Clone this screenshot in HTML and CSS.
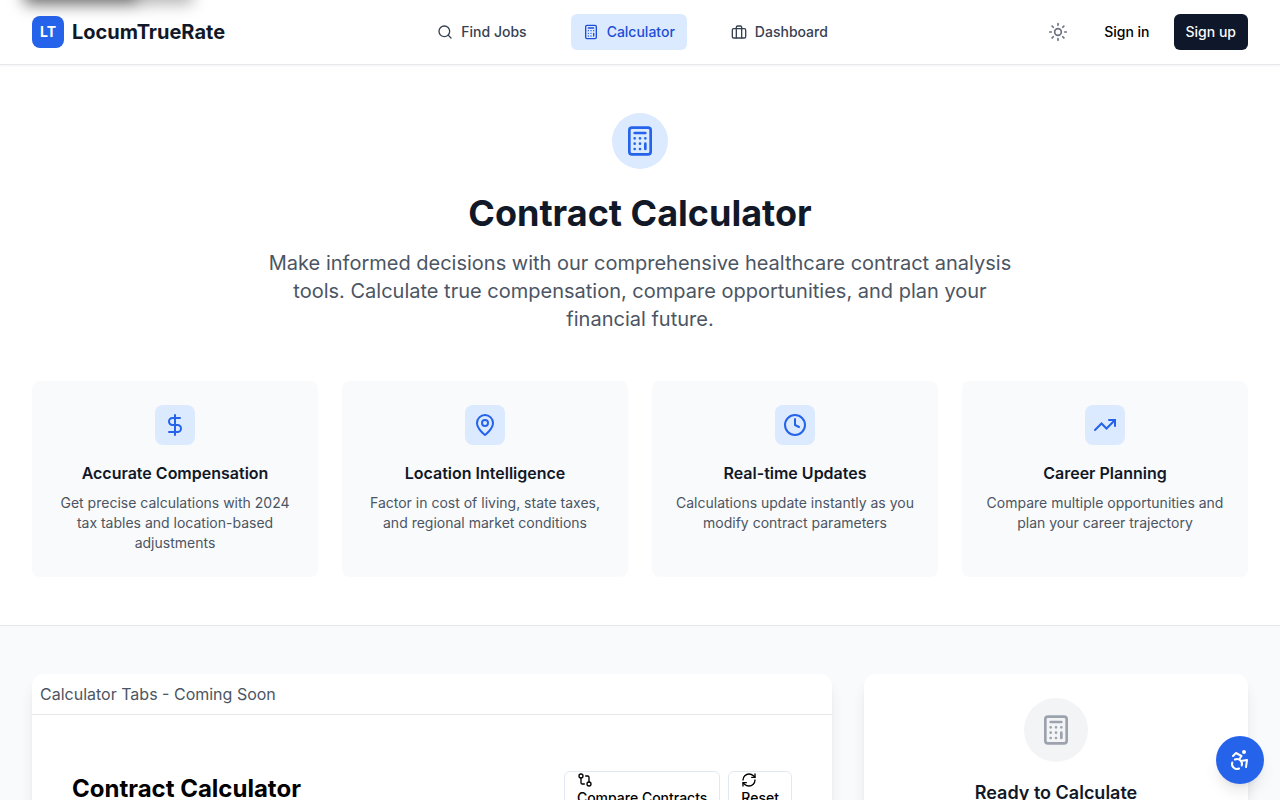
FILE: index.html
```html
<!DOCTYPE html>
<html lang="en">
<head>
<meta charset="utf-8">
<meta name="viewport" content="width=device-width, initial-scale=1">
<title>Contract Calculator | LocumTrueRate</title>
<link rel="stylesheet" href="styles.css">
</head>
<body>
<svg class="sprite" aria-hidden="true">
  <symbol id="calculator" viewBox="0 0 24 24"><rect x="4" y="2" width="16" height="20" rx="2"/><path d="M8 6h8M16 14v4M16 10h.01M12 10h.01M8 10h.01M12 14h.01M8 14h.01M12 18h.01M8 18h.01"/></symbol>
  <symbol id="search" viewBox="0 0 24 24"><circle cx="11" cy="11" r="8"/><path d="m21 21-4.300-4.300"/></symbol>
  <symbol id="briefcase" viewBox="0 0 24 24"><rect x="2" y="7" width="20" height="14" rx="2"/><path d="M16 21V5a2 2 0 0 0-2-2h-4a2 2 0 0 0-2 2v16"/></symbol>
  <symbol id="sun" viewBox="0 0 24 24"><circle cx="12" cy="12" r="4"/><path d="M12 2v2M12 20v2m-7.070-17.070 1.410 1.410m11.320 11.320 1.410 1.410M2 12h2m16 0h2M6.340 17.660l-1.410 1.410M19.070 4.930l-1.410 1.410"/></symbol>
  <symbol id="dollar" viewBox="0 0 24 24"><path d="M12 2v20M17 5H9.500a3.500 3.500 0 0 0 0 7h5a3.500 3.500 0 0 1 0 7H6"/></symbol>
  <symbol id="pin" viewBox="0 0 24 24"><path d="M20 10c0 6-8 12-8 12s-8-6-8-12a8 8 0 0 1 16 0Z"/><circle cx="12" cy="10" r="3"/></symbol>
  <symbol id="clock" viewBox="0 0 24 24"><circle cx="12" cy="12" r="10"/><path d="M12 6v6l4 2"/></symbol>
  <symbol id="trend" viewBox="0 0 24 24"><path d="m22 7-8.500 8.500-5-5L2 17"/><path d="M16 7h6v6"/></symbol>
  <symbol id="compare" viewBox="0 0 24 24"><circle cx="18" cy="18" r="3"/><circle cx="6" cy="6" r="3"/><path d="M13 6h3a2 2 0 0 1 2 2v7M11 18H8a2 2 0 0 1-2-2V9"/></symbol>
  <symbol id="refresh" viewBox="0 0 24 24"><path d="M3 12a9 9 0 0 1 9-9 9.750 9.750 0 0 1 6.740 2.740L21 8"/><path d="M21 3v5h-5M21 12a9 9 0 0 1-9 9 9.750 9.750 0 0 1-6.740-2.740L3 16"/><path d="M8 16H3v5"/></symbol>
  <symbol id="accessibility" viewBox="0 0 24 24"><circle cx="16" cy="4" r="1"/><path d="m18 19 1-7-6 1M5 8l3-3 5.500 3-2.360 3.500M4.240 14.500a5 5 0 0 0 6.880 6M13.760 17.500a5 5 0 0 0-6.880-6"/></symbol>
</svg>

<div class="skip-links">
  <a class="skip-link skip-content" href="#main">Skip to content</a>
  <a class="skip-link skip-nav" href="#nav">Menu</a>
</div>

<header class="site-header">
  <div class="container header-row">
    <a class="brand" href="#"><span class="brand-mark">LT</span><span class="brand-name">LocumTrueRate</span></a>
    <nav class="nav" id="nav" aria-label="Main">
      <a class="nav-link" href="#"><svg class="icon icon-sm"><use href="#search"/></svg>Find Jobs</a>
      <a class="nav-link nav-link-active" href="#" aria-current="page"><svg class="icon icon-sm"><use href="#calculator"/></svg>Calculator</a>
      <a class="nav-link" href="#"><svg class="icon icon-sm"><use href="#briefcase"/></svg>Dashboard</a>
    </nav>
    <div class="actions">
      <button class="theme-toggle" type="button" aria-label="Toggle theme"><svg class="icon icon-md"><use href="#sun"/></svg></button>
      <div class="auth">
        <button class="btn btn-ghost" type="button">Sign in</button>
        <button class="btn btn-dark" type="button">Sign up</button>
      </div>
    </div>
  </div>
</header>

<main id="main">
  <section class="hero">
    <div class="container">
      <div class="intro">
        <div class="hero-icon"><svg class="icon icon-xl"><use href="#calculator"/></svg></div>
        <h1 class="hero-title">Contract Calculator</h1>
        <p class="hero-text">Make informed decisions with our comprehensive healthcare contract analysis tools. Calculate true compensation, compare opportunities, and plan your financial future.</p>
      </div>
      <div class="features">
        <article class="feature">
          <div class="feature-icon"><svg class="icon icon-lg"><use href="#dollar"/></svg></div>
          <h3 class="feature-title">Accurate Compensation</h3>
          <p class="feature-text">Get precise calculations with 2024 tax tables and location-based adjustments</p>
        </article>
        <article class="feature">
          <div class="feature-icon"><svg class="icon icon-lg"><use href="#pin"/></svg></div>
          <h3 class="feature-title">Location Intelligence</h3>
          <p class="feature-text">Factor in cost of living, state taxes, and regional market conditions</p>
        </article>
        <article class="feature">
          <div class="feature-icon"><svg class="icon icon-lg"><use href="#clock"/></svg></div>
          <h3 class="feature-title">Real-time Updates</h3>
          <p class="feature-text">Calculations update instantly as you modify contract parameters</p>
        </article>
        <article class="feature">
          <div class="feature-icon"><svg class="icon icon-lg icon-sharp"><use href="#trend"/></svg></div>
          <h3 class="feature-title">Career Planning</h3>
          <p class="feature-text">Compare multiple opportunities and plan your career trajectory</p>
        </article>
      </div>
    </div>
  </section>

  <div class="container workspace">
    <section class="panel">
      <div class="tabs">Calculator Tabs - Coming Soon</div>
      <div class="panel-body">
        <h2 class="panel-title">Contract Calculator</h2>
        <div class="tools">
          <button class="btn btn-outline" type="button"><svg class="icon icon-sm"><use href="#compare"/></svg>Compare Contracts</button>
          <button class="btn btn-outline" type="button"><svg class="icon icon-sm"><use href="#refresh"/></svg>Reset</button>
        </div>
      </div>
    </section>
    <aside class="panel ready">
      <div class="ready-icon"><svg class="icon icon-xl"><use href="#calculator"/></svg></div>
      <h3 class="ready-title">Ready to Calculate</h3>
    </aside>
  </div>
</main>

<button class="fab" type="button" aria-label="Accessibility options"><svg class="icon icon-lg"><use href="#accessibility"/></svg></button>
</body>
</html>
```
FILE: styles.css
```css
*, *::before, *::after { box-sizing: border-box; }
body {
  margin: 0;
  background: #f9fafb;
  color: #000;
  font-family: Inter, "Liberation Sans", sans-serif;
  font-size: 16px;
  line-height: 24px;
  -webkit-font-smoothing: antialiased;
}
h1, h2, h3, p { margin: 0; }
a { color: inherit; text-decoration: none; }
button { font: inherit; color: inherit; border: 0; background: none; cursor: pointer; }

.sprite { position: absolute; width: 0; height: 0; }
.icon { display: block; flex: none; fill: none; stroke: currentColor; stroke-width: 2; stroke-linecap: round; stroke-linejoin: round; }
.icon-sm { width: 16px; height: 16px; }
.icon-md { width: 20px; height: 20px; }
.icon-lg { width: 24px; height: 24px; }
.icon-xl { width: 32px; height: 32px; }
.icon-sharp { stroke-linejoin: miter; }

.container { max-width: 1280px; margin: 0 auto; padding: 0 32px; }

/* Parked just above the window until focused; their shadows reach below the edge. */
.skip-links { position: absolute; top: -48px; left: 24px; z-index: 20; display: flex; }
.skip-links:focus-within { top: 8px; }
.skip-link {
  padding: 8px 8px 16px;
  border-radius: 4px;
  background: #000;
  color: #fff;
  font-size: 14px;
  white-space: nowrap;
}
.skip-content { box-shadow: 0 4px 16px rgba(0, 0, 0, .6); }
.skip-nav { box-shadow: 0 4px 16px rgba(0, 0, 0, .3); }

.site-header {
  position: sticky;
  top: 0;
  z-index: 10;
  background: #fff;
  border-bottom: 1px solid #e5e7eb;
  box-shadow: 0 1px 2px rgba(0, 0, 0, .05);
}
.header-row { display: flex; align-items: center; justify-content: space-between; min-height: 64px; }
.brand { display: flex; align-items: center; gap: 8px; }
.brand-mark {
  display: grid;
  place-items: center;
  width: 32px;
  height: 32px;
  border-radius: 8px;
  background: #2563eb;
  color: #fff;
  font-size: 14px;
  font-weight: 700;
}
.brand-name { color: #111827; font-size: 20px; font-weight: 700; line-height: 28px; }
.nav { display: flex; gap: 32px; }
.nav-link {
  display: flex;
  align-items: center;
  gap: 8px;
  padding: 8px 12px;
  border-radius: 6px;
  color: #374151;
  font-size: 14px;
  font-weight: 500;
  line-height: 20px;
}
.nav-link-active { background: #dbeafe; color: #1d4ed8; }
.actions { display: flex; align-items: center; gap: 16px; }
.auth { display: flex; gap: 12px; }
.theme-toggle { padding: 8px; color: #6b7280; }
.btn { height: 36px; padding: 0 12px; border-radius: 6px; font-size: 14px; font-weight: 500; line-height: 20px; white-space: nowrap; }
.btn-dark { background: #0f172a; color: #f8fafc; }
.btn-outline { padding-bottom: 2px; border: 1px solid #e2e8f0; background: #fff; text-align: left; }

.hero { padding: 48px 0; background: #fff; border-bottom: 1px solid #e5e7eb; }
.intro { display: flex; flex-direction: column; align-items: center; margin-bottom: 48px; text-align: center; }
.hero-icon { display: grid; place-items: center; width: 56px; height: 56px; margin-bottom: 24px; border-radius: 50%; background: #dbeafe; color: #2563eb; }
.hero-title { margin-bottom: 16px; color: #111827; font-size: 36px; font-weight: 700; line-height: 40px; }
.hero-text { max-width: 768px; color: #4b5563; font-size: 20px; line-height: 28px; }
.features { display: grid; grid-template-columns: repeat(4, 1fr); gap: 24px; }
.feature { padding: 24px; border-radius: 8px; background: #f9fafb; text-align: center; }
.feature-icon { display: grid; place-items: center; width: 40px; height: 40px; margin: 0 auto 16px; border-radius: 8px; background: #dbeafe; color: #2563eb; }
.feature-title { margin-bottom: 8px; color: #111827; font-size: 16px; font-weight: 600; line-height: 24px; }
.feature-text { color: #4b5563; font-size: 14px; line-height: 20px; }

.workspace { display: grid; grid-template-columns: repeat(3, 1fr); align-items: start; gap: 32px; padding-top: 48px; padding-bottom: 48px; }
.panel { grid-column: span 2; border-radius: 12px; background: #fff; box-shadow: 0 10px 15px -3px rgba(0, 0, 0, .1), 0 4px 6px -4px rgba(0, 0, 0, .1); }
.tabs { padding: 8px; border-bottom: 1px solid #e5e7eb; color: #4b5563; }
.panel-body { display: flex; align-items: center; justify-content: space-between; padding: 56px 40px; }
.panel-title { font-size: 24px; font-weight: 700; line-height: 34px; }
.tools { display: flex; gap: 8px; }
.ready { grid-column: span 1; padding: 24px; text-align: center; }
.ready-icon { display: grid; place-items: center; width: 64px; height: 64px; margin: 0 auto 16px; border-radius: 50%; background: #f3f4f6; color: #9ca3af; }
.ready-title { color: #111827; font-size: 18px; font-weight: 600; line-height: 30px; }

.fab {
  position: fixed;
  right: 16px;
  bottom: 16px;
  z-index: 15;
  display: grid;
  place-items: center;
  width: 48px;
  height: 48px;
  padding: 0;
  border-radius: 50%;
  background: #2563eb;
  color: #fff;
  box-shadow: 0 10px 15px -3px rgba(0, 0, 0, .1), 0 4px 6px -4px rgba(0, 0, 0, .1);
}
```
